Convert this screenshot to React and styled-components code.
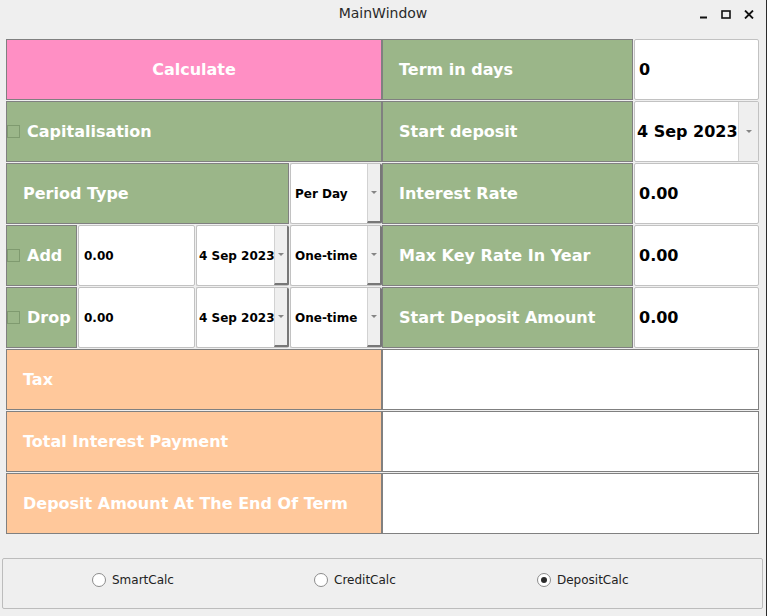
import styled, { createGlobalStyle } from 'styled-components';

const GlobalStyle = createGlobalStyle`
    html, body {
        margin: 0;
        padding: 0;
        background: #efefef;
    }
    * {
        box-sizing: border-box;
    }
`;

const GREEN = '#9bb689';
const PINK = '#ff8fc4';
const PEACH = '#ffc89b';

const Window = styled.div`
    width: 767px;
    height: 616px;
    background: #efefef;
    border-right: 1px solid #2b2b2b;
    font-family: "DejaVu Sans", "Liberation Sans", sans-serif;
    overflow: hidden;
`;

const TitleBar = styled.div`
    position: relative;
    height: 26px;
    line-height: 26px;
    text-align: center;
    font-size: 14px;
    color: #2a2a2a;
`;

const Controls = styled.div`
    position: absolute;
    top: 10px;
    right: 12px;
    display: flex;
    gap: 13px;
    align-items: flex-end;
`;

// qt grid: widgets sit flush against the right-hand block, 1px apart elsewhere
const Grid = styled.div`
    display: grid;
    grid-template-columns: 72px 118px 94px 92px 252px 125px;
    grid-auto-rows: 61px;
    row-gap: 1px;
    margin: 13px 0 0 6px;
`;

const Cell = styled.div`
    grid-column: ${p => p.$col || 'auto'};
    margin-right: ${p => (p.$flush ? '0' : '1px')};
    display: flex;
    align-items: center;
    justify-content: ${p => (p.$center ? 'center' : 'flex-start')};
    gap: 7px;
    padding-left: ${p => (p.$check || p.$center ? '0' : '16px')};
    background: ${p => p.$bg || GREEN};
    border: 1px solid #808080;
    color: #fff;
    font-weight: bold;
    font-size: 16px;
    white-space: nowrap;
    overflow: hidden;
`;

const CheckBox = styled.span`
    width: 13px;
    height: 13px;
    flex: none;
    border: 1px solid #7f9a6f;
`;

const Input = styled.div`
    margin-right: ${p => (p.$small ? '1px' : '0')};
    display: flex;
    align-items: center;
    padding-left: ${p => (p.$small ? '5px' : '4px')};
    background: #fff;
    border: 1px solid #c2c2c2;
    border-radius: 2px;
    color: #000;
    font-weight: bold;
    font-size: ${p => (p.$small ? '12px' : '16px')};
`;

const Result = styled.div`
    grid-column: 5 / span 2;
    background: #fff;
    border: 1px solid #808080;
`;

const Combo = styled.div`
    margin-right: ${p => (p.$gap ? '1px' : '0')};
    display: flex;
    background: #fff;
    border: 1px solid #c2c2c2;
    border-right: ${p => (p.$flat ? '1px solid #c2c2c2' : 'none')};
    border-radius: 2px;
    overflow: hidden;
    color: #000;
    font-weight: bold;
    font-size: ${p => (p.$small ? '12px' : '16px')};
`;

const ComboText = styled.div`
    flex: 1;
    display: flex;
    align-items: center;
    padding-left: ${p => p.$indent || '2px'};
    white-space: nowrap;
    overflow: hidden;
`;

const ComboButton = styled.div`
    flex: none;
    width: ${p => (p.$flat ? '20px' : '15px')};
    display: flex;
    align-items: center;
    justify-content: center;
    background: #efefef;
    border-left: 1px solid #d2d2d2;
    border-right: ${p => (p.$flat ? 'none' : '2px solid #777')};
    border-bottom: ${p => (p.$flat ? 'none' : '2px solid #777')};

    &::after {
        content: '';
        border-left: 3px solid transparent;
        border-right: 3px solid transparent;
        border-top: 3px solid #858585;
    }
`;

const GroupBox = styled.div`
    display: grid;
    grid-template-columns: 222px 223px 223px;
    align-items: center;
    width: 761px;
    height: 51px;
    margin: 24px 0 0 2px;
    padding: 0 0 8px 89px;
    border: 1px solid #bcbcbc;
    border-radius: 2px;
`;

const Radio = styled.label`
    display: flex;
    align-items: center;
    gap: 6px;
    font-size: 12px;
    color: #222;
`;

const RadioCircle = styled.span`
    width: 14px;
    height: 14px;
    border: 1px solid #8c8c8c;
    border-radius: 50%;
    background: #fff;
    display: flex;
    align-items: center;
    justify-content: center;

    &::after {
        content: '';
        display: ${p => (p.$checked ? 'block' : 'none')};
        width: 6px;
        height: 6px;
        border-radius: 50%;
        background: #2b2b2b;
    }
`;

const DateCombo = ({ small }) => (
    <Combo $small={small} $flat={!small} $gap={small}>
        <ComboText $indent={small ? '2px' : '2px'}>4 Sep 2023</ComboText>
        <ComboButton $flat={!small} />
    </Combo>
);

const TypeCombo = ({ text }) => (
    <Combo $small>
        <ComboText $indent="4px">{text}</ComboText>
        <ComboButton />
    </Combo>
);

const WindowControls = () => (
    <Controls>
        <svg width="9" height="9" viewBox="0 0 9 9">
            <rect x="1" y="6.5" width="7" height="2" fill="#111" />
        </svg>
        <svg width="10" height="9" viewBox="0 0 10 9">
            <rect x="1" y="1" width="8" height="7" fill="none" stroke="#111" strokeWidth="1.6" />
        </svg>
        <svg width="10" height="9" viewBox="0 0 10 9">
            <path d="M1 0.5 L9 8.5 M9 0.5 L1 8.5" stroke="#111" strokeWidth="1.8" />
        </svg>
    </Controls>
);

const App = () => {
    return (
        <Window>
            <GlobalStyle />
            <TitleBar>
                MainWindow
                <WindowControls />
            </TitleBar>
            <Grid>
                <Cell $col="1 / span 4" $bg={PINK} $center $flush>Calculate</Cell>
                <Cell>Term in days</Cell>
                <Input>0</Input>

                <Cell $col="1 / span 4" $check $flush><CheckBox />Capitalisation</Cell>
                <Cell>Start deposit</Cell>
                <DateCombo />

                <Cell $col="1 / span 3">Period Type</Cell>
                <TypeCombo text="Per Day" />
                <Cell>Interest Rate</Cell>
                <Input>0.00</Input>

                <Cell $check><CheckBox />Add</Cell>
                <Input $small>0.00</Input>
                <DateCombo small />
                <TypeCombo text="One-time" />
                <Cell>Max Key Rate In Year</Cell>
                <Input>0.00</Input>

                <Cell $check><CheckBox />Drop</Cell>
                <Input $small>0.00</Input>
                <DateCombo small />
                <TypeCombo text="One-time" />
                <Cell>Start Deposit Amount</Cell>
                <Input>0.00</Input>

                <Cell $col="1 / span 4" $bg={PEACH} $flush>Tax</Cell>
                <Result />

                <Cell $col="1 / span 4" $bg={PEACH} $flush>Total Interest Payment</Cell>
                <Result />

                <Cell $col="1 / span 4" $bg={PEACH} $flush>Deposit Amount At The End Of Term</Cell>
                <Result />
            </Grid>
            <GroupBox>
                <Radio><RadioCircle />SmartCalc</Radio>
                <Radio><RadioCircle />CreditCalc</Radio>
                <Radio><RadioCircle $checked />DepositCalc</Radio>
            </GroupBox>
        </Window>
    );
};

export default App;
